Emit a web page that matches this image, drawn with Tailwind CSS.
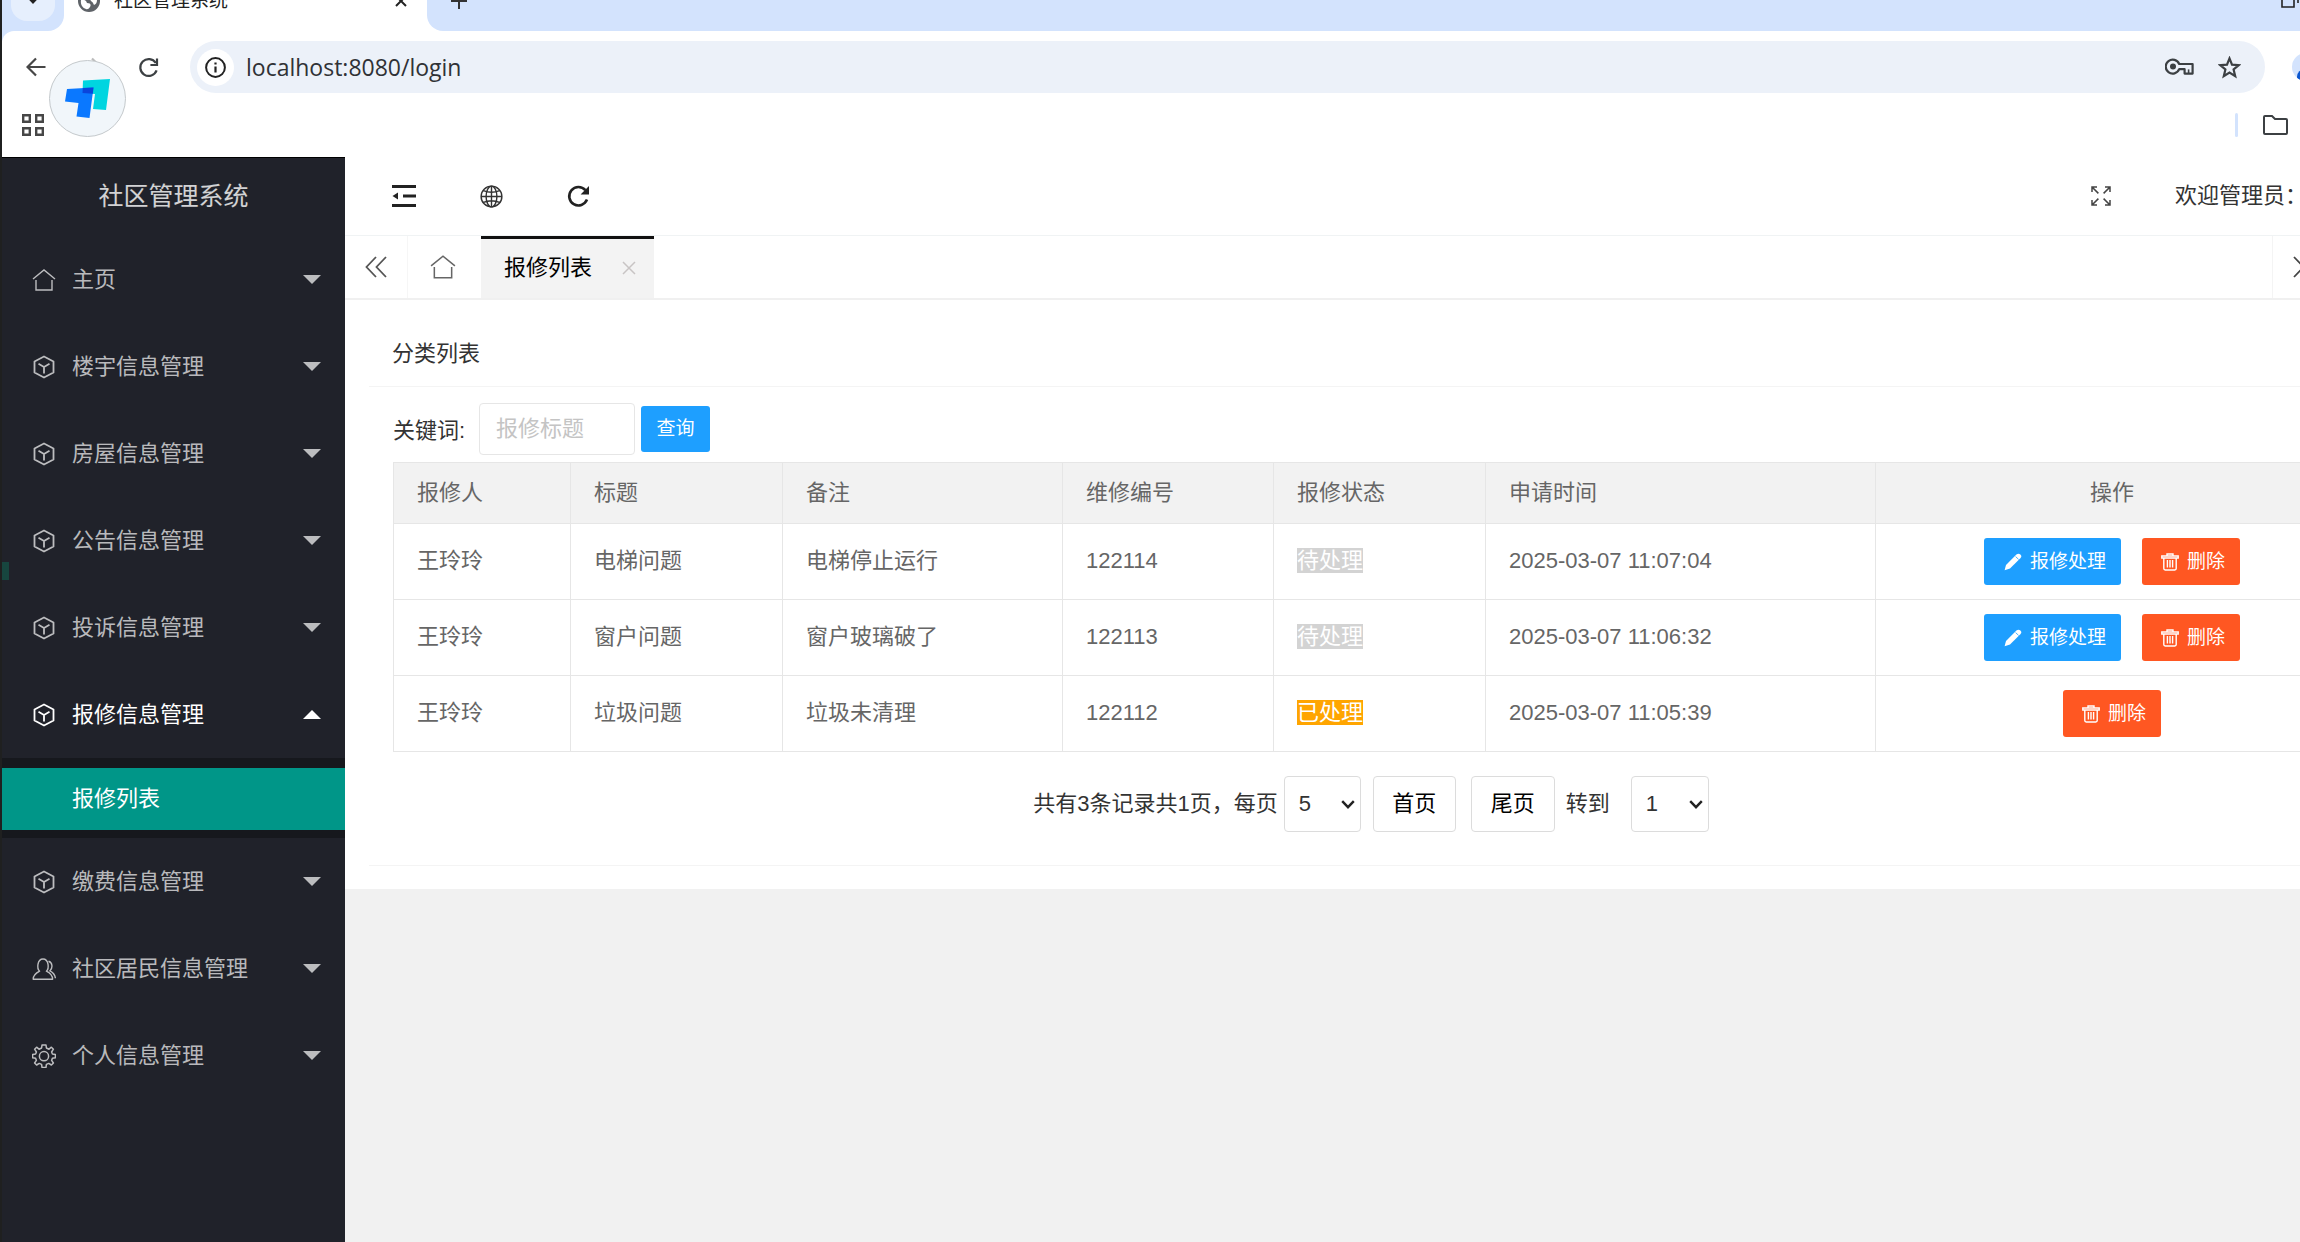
<!DOCTYPE html>
<html lang="zh-CN">
<head>
  <meta charset="UTF-8" />
  <meta name="viewport" content="width=device-width, initial-scale=1" />
  <title>社区管理系统</title>
  <script src="https://cdn.jsdelivr.net/npm/@tailwindcss/browser@4"></script>
  <style>
    body {
      font-family: 'Liberation Sans', 'Noto Sans CJK SC', sans-serif;
    }
  </style>
</head>
<body class="h-screen overflow-hidden bg-[#1f2020] pl-[2px] flex flex-col text-[22px] leading-8 text-[#333]">
  <!-- icons -->
  <svg class="hidden">
    <symbol id="i-home" viewBox="0 0 24 24">
      <path d="M1 11 L12 2 L23 11 M4 12 V22 H20 V12" fill="none" stroke="currentColor" stroke-width="1.4" />
    </symbol>
    <symbol id="i-cube" viewBox="0 0 24 24">
      <path d="M12 1.5 L21.5 6.5 V17.5 L12 22.5 L2.5 17.5 V6.5 Z M6.5 8.8 L12 12 L17.5 8.8 M12 12 V18.5" fill="none" stroke="currentColor" stroke-width="1.8" stroke-linejoin="round" />
    </symbol>
    <symbol id="i-users" viewBox="0 0 24 24">
      <path d="M7.6 14.2 C4.6 11.5 5.2 2 11 2 C16.8 2 17.4 11.5 14.4 14.2 C17.5 15.8 20.6 18 20.6 22.2 H1.2 C1.2 18 4.5 15.8 7.6 14.2 Z" fill="none" stroke="currentColor" stroke-width="1.4" stroke-linejoin="round" />
      <path d="M16.5 4.2 C20.8 5.2 20.8 11.5 18 13.8 C21 15.4 23 17.6 23.4 21.2" fill="none" stroke="currentColor" stroke-width="1.4" />
    </symbol>
    <symbol id="i-gear" viewBox="0 0 24 24">
      <path d="M10 1 H14 L14.4 4 L17 5.2 L19.4 3.2 L21.4 5.2 L19.6 8 L20.4 10 L23.4 10.4 V13.8 L20.4 14.2 L19.6 16.4 L21.4 19 L19.4 21 L16.8 19.4 L14.4 20.4 L14 23.4 H10 L9.6 20.4 L7.2 19.4 L4.6 21 L2.6 19 L4.4 16.4 L3.6 14.2 L0.6 13.8 V10.4 L3.6 10 L4.4 8 L2.6 5.2 L4.6 3.2 L7 5.2 L9.6 4 Z" fill="none" stroke="currentColor" stroke-width="1.5" stroke-linejoin="round" />
      <circle cx="12" cy="12.2" r="4.6" fill="none" stroke="currentColor" stroke-width="1.5" />
    </symbol>
    <symbol id="i-caret" viewBox="0 0 18 9">
      <path d="M0 0 H18 L9 9 Z" fill="currentColor" />
    </symbol>
    <symbol id="i-edit" viewBox="0 0 18 18">
      <path d="M0.6 17.2 L2 12 L12.4 1.6 Q14.4 -0.2 16.4 1.4 Q18.2 3.2 16.6 5 L6 15.6 Z" fill="currentColor" />
      <path d="M11.6 3.6 L14.6 6.4" stroke="#1e9fff" stroke-width="0.8" />
    </symbol>
    <symbol id="i-trash" viewBox="0 0 18 18">
      <path d="M6 2.4 V1 H12 V2.4 M0.8 3 H17.2 V5 H0.8 Z M2.8 5 V15.6 Q2.8 17 4.2 17 H13.8 Q15.2 17 15.2 15.6 V5 M6.4 7 V14.6 M9 7 V14.6 M11.6 7 V14.6" fill="none" stroke="currentColor" stroke-width="1.4" />
    </symbol>
    <symbol id="i-chevron" viewBox="0 0 14 9">
      <path d="M1.2 1.2 L7 7.2 L12.8 1.2" fill="none" stroke="#222" stroke-width="2.4" />
    </symbol>
  </svg>

  <!-- browser chrome -->
  <header class="relative bg-[#d3e3fd] text-[#3c4043]">
    <div class="flex items-end h-[31px] overflow-hidden bg-white">
      <div class="w-[62px] h-[60px] shrink-0 bg-[#d3e3fd] rounded-br-[16px] flex justify-center">
        <button class="w-[44px] h-[50px] rounded-2xl bg-[#e6effd] flex items-end justify-center pb-[17px]" aria-label="搜索标签页">
          <svg class="w-[14px] h-[9px]"><use href="#i-chevron" /></svg>
        </button>
      </div>
      <div class="w-[363px] h-[60px] shrink-0 bg-white flex items-center pl-[14px] pr-[20px]">
        <svg class="w-[22px] h-[22px]" viewBox="0 0 22 22">
          <circle cx="11" cy="11" r="11" fill="#5f6368" />
          <path d="M3 10 Q8 9 9 13 Q14 13 12 17 Q10 20 8 19 Q2 17 3 10 Z M13 6 Q18 5 19 10 Q19 14 16 15 Q15 12 13 11 Q11 8 13 6 Z" fill="#fff" />
        </svg>
        <span class="pl-[14px] text-[19px] text-[#222]">社区管理系统</span>
        <button class="ml-auto" aria-label="关闭标签页">
          <svg class="w-3 h-3" viewBox="0 0 12 12"><path d="M1 1 L11 11 M11 1 L1 11" stroke="#222" stroke-width="2" /></svg>
        </button>
      </div>
      <div class="flex-1 h-[60px] bg-[#d3e3fd] rounded-bl-[16px] flex items-center justify-between pl-[24px]">
        <button aria-label="新标签页">
          <svg class="w-4 h-4" viewBox="0 0 16 16"><path d="M8 0 V16 M0 8 H16" stroke="#333" stroke-width="2" /></svg>
        </button>
        <svg class="w-[19px] h-5" viewBox="0 0 19 20"><path d="M1 4 H13 V16 H1 Z M5 0 H17 V12" fill="none" stroke="#222" stroke-width="1.6" /></svg>
      </div>
    </div>
    <div class="bg-white rounded-tl-[12px] h-[126px] pt-[10px]">
      <div class="flex items-center h-[52px]">
        <button class="ml-[24px]" aria-label="后退">
          <svg class="w-5 h-5" viewBox="0 0 20 20"><path d="M19.5 10 H2 M10 1.5 L1.5 10 L10 18.5" fill="none" stroke="#474747" stroke-width="2.2" /></svg>
        </button>
        <button class="ml-[36px]" aria-label="前进">
          <svg class="w-5 h-5" viewBox="0 0 20 20"><path d="M0.5 10 H18 M10 1.5 L18.5 10 L10 18.5" fill="none" stroke="#bbb" stroke-width="2.2" /></svg>
        </button>
        <button class="ml-[36px]" aria-label="重新加载">
          <svg class="w-[21px] h-[21px]" viewBox="0 0 21 21">
            <path d="M18.6 13.4 A8.4 8.4 0 1 1 17.8 6 M19 1.5 V8 H12.4" fill="none" stroke="#3c4043" stroke-width="2.2" />
          </svg>
        </button>
        <div class="ml-[31px] mr-[35px] h-[52px] flex-1 flex items-center rounded-full bg-[#ecf1f9] pl-[7px] pr-[24px]">
          <span class="w-[37px] h-[37px] rounded-full bg-white flex items-center justify-center">
            <svg class="w-[21px] h-[21px]" viewBox="0 0 21 21">
              <circle cx="10.5" cy="10.5" r="9.4" fill="none" stroke="#222" stroke-width="2" />
              <path d="M10.5 9.4 V15.4 M10.5 5.4 V7.6" stroke="#222" stroke-width="2.2" />
            </svg>
          </span>
          <input type="text" aria-label="地址" value="localhost:8080/login" class="ml-[12px] flex-1 bg-transparent outline-none font-['Open_Sans',sans-serif] text-[23px] text-[#303236]" />
          <svg class="w-[29px] h-[18px]" viewBox="0 0 29 18">
            <path d="M14.2 6 A7 7 0 1 0 14.2 11.2 H19.6 V15.6 H27.6 V6 Z" fill="none" stroke="#3c4043" stroke-width="2.2" stroke-linejoin="round" />
            <circle cx="8" cy="8.6" r="3" fill="#3c4043" />
            <path d="M23.6 11.4 V15" stroke="#3c4043" stroke-width="1.6" />
          </svg>
          <svg class="ml-[24px] w-[23px] h-[23px]" viewBox="0 0 23 23">
            <path d="M11.5 2.4 L14 8.6 L20.8 9.1 L15.6 13.5 L17.2 20.2 L11.5 16.6 L5.8 20.2 L7.4 13.5 L2.2 9.1 L9 8.6 Z" fill="none" stroke="#3c4043" stroke-width="2.2" />
          </svg>
        </div>
      </div>
      <div class="flex items-center h-[64px] pl-[20px] pr-[12px]">
        <svg class="w-[22px] h-[22px]" viewBox="0 0 22 22">
          <path d="M1.2 1.2 H7.8 V7.8 H1.2 Z M14.2 1.2 H20.8 V7.8 H14.2 Z M1.2 14.2 H7.8 V20.8 H1.2 Z M14.2 14.2 H20.8 V20.8 H14.2 Z" fill="none" stroke="#474747" stroke-width="2.4" />
        </svg>
        <span class="ml-auto mr-[25px] w-[3px] h-6 rounded bg-[#d3e3fd]"></span>
        <svg class="w-[25px] h-5" viewBox="0 0 25 20">
          <path d="M1 2 Q1 1 2 1 H9 L12 4 H23 Q24 4 24 5 V18 Q24 19 23 19 H2 Q1 19 1 18 Z" fill="none" stroke="#3c4043" stroke-width="2" />
        </svg>
      </div>
    </div>
    <!-- profile button, cut by the window edge -->
    <div class="absolute -right-[20px] top-[53px] w-[28px] h-[28px] rounded-full bg-[#d3e3fd] overflow-hidden">
      <div class="absolute left-[5px] top-[16px] w-[20px] h-[16px] rounded-full bg-[#0b57d0]"></div>
    </div>
    <!-- floating launcher -->
    <div class="absolute left-[47px] top-[60px] w-[77px] h-[77px] rounded-full bg-[#f1f6fa] border border-[#c4c9cc] flex items-center justify-center">
      <svg class="w-[45px] h-[40px]" viewBox="0 0 45 40">
        <path d="M18 1.5 L45 0 L41 31 L28 30 L30 15 L17.5 14 Z" fill="#00d5e0" />
        <path d="M2 10 L28.5 8.5 L24.5 39 L11.5 37.5 L13.5 24 L0 22.5 Z" fill="#0a78ff" />
        <path d="M17.8 9.1 L28.5 8.5 L27.8 14.8 L17.5 14 Z" fill="#0a45dc" />
      </svg>
    </div>
  </header>

  <div class="flex-1 flex min-h-0">
    <!-- sidebar -->
    <aside class="relative w-[343px] shrink-0 bg-[#20222a] border-t border-black text-white/70">
      <h1 class="h-[78px] pb-[2px] flex items-center justify-center text-[25px] text-white/80">社区管理系统</h1>
      <nav>
        <a href="#" class="flex items-center h-[87px] pl-[30px] pr-[24px]"><svg class="w-6 h-6 mr-[16px]"><use href="#i-home" /></svg>主页<svg class="ml-auto w-[18px] h-[9px]"><use href="#i-caret" /></svg></a>
        <a href="#" class="flex items-center h-[87px] pl-[30px] pr-[24px]"><svg class="w-6 h-6 mr-[16px]"><use href="#i-cube" /></svg>楼宇信息管理<svg class="ml-auto w-[18px] h-[9px]"><use href="#i-caret" /></svg></a>
        <a href="#" class="flex items-center h-[87px] pl-[30px] pr-[24px]"><svg class="w-6 h-6 mr-[16px]"><use href="#i-cube" /></svg>房屋信息管理<svg class="ml-auto w-[18px] h-[9px]"><use href="#i-caret" /></svg></a>
        <a href="#" class="flex items-center h-[87px] pl-[30px] pr-[24px]"><svg class="w-6 h-6 mr-[16px]"><use href="#i-cube" /></svg>公告信息管理<svg class="ml-auto w-[18px] h-[9px]"><use href="#i-caret" /></svg></a>
        <a href="#" class="flex items-center h-[87px] pl-[30px] pr-[24px]"><svg class="w-6 h-6 mr-[16px]"><use href="#i-cube" /></svg>投诉信息管理<svg class="ml-auto w-[18px] h-[9px]"><use href="#i-caret" /></svg></a>
        <a href="#" class="flex items-center h-[87px] pl-[30px] pr-[24px] text-white"><svg class="w-6 h-6 mr-[16px]"><use href="#i-cube" /></svg>报修信息管理<svg class="ml-auto w-[18px] h-[9px] rotate-180"><use href="#i-caret" /></svg></a>
        <div class="bg-[#16181d] pt-[10px] pb-2">
          <a href="#" class="flex items-center h-[62px] pl-[70px] bg-[#009688] text-white">报修列表</a>
        </div>
        <a href="#" class="flex items-center h-[87px] pl-[30px] pr-[24px]"><svg class="w-6 h-6 mr-[16px]"><use href="#i-cube" /></svg>缴费信息管理<svg class="ml-auto w-[18px] h-[9px]"><use href="#i-caret" /></svg></a>
        <a href="#" class="flex items-center h-[87px] pl-[30px] pr-[24px]"><svg class="w-6 h-6 mr-[16px]"><use href="#i-users" /></svg>社区居民信息管理<svg class="ml-auto w-[18px] h-[9px]"><use href="#i-caret" /></svg></a>
        <a href="#" class="flex items-center h-[87px] pl-[30px] pr-[24px]"><svg class="w-6 h-6 mr-[16px]"><use href="#i-gear" /></svg>个人信息管理<svg class="ml-auto w-[18px] h-[9px]"><use href="#i-caret" /></svg></a>
      </nav>
      <!-- hover bar -->
      <span class="absolute left-0 top-[404px] w-[7px] h-[18px] bg-[#17463f]"></span>
    </aside>

    <main class="flex-1 min-w-0 overflow-hidden bg-[#f1f1f1]">
      <!-- top bar -->
      <div class="h-[79px] bg-white border-b border-[#f0f3f4] flex items-center pl-[47px]">
        <button aria-label="侧边伸缩">
          <svg class="w-6 h-6" viewBox="0 0 24 24">
            <path d="M0 2.5 H24 M11 12 H24 M0 21.5 H24" stroke="#222" stroke-width="3" />
            <path d="M0.5 12 L6 8.6 V15.4 Z" fill="#222" />
          </svg>
        </button>
        <button class="ml-[64px]" aria-label="前台">
          <svg class="w-[23px] h-[23px]" viewBox="0 0 23 23">
            <g fill="none" stroke="#333" stroke-width="1.4">
              <circle cx="11.5" cy="11.5" r="10.4" />
              <ellipse cx="11.5" cy="11.5" rx="5.4" ry="10.4" />
              <path d="M11.5 1 V22 M1 11.5 H22 M3.4 5.6 Q11.5 9 19.6 5.6 M3.4 17.4 Q11.5 14 19.6 17.4" />
            </g>
          </svg>
        </button>
        <button class="ml-[64px]" aria-label="刷新">
          <svg class="w-[23px] h-[23px]" viewBox="0 0 23 23">
            <path d="M20 14.6 A9.2 9.2 0 1 1 18.4 5.2" fill="none" stroke="#222" stroke-width="2.6" />
            <path d="M22 1 V9.4 H13.6 Z" fill="#222" />
          </svg>
        </button>
        <button class="ml-auto mr-[64px]" aria-label="全屏">
          <svg class="w-5 h-5" viewBox="0 0 20 20">
            <path d="M1 6 V1 H6 M1 1 L7.4 7.4 M14 1 H19 V6 M19 1 L12.6 7.4 M1 14 V19 H6 M1 19 L7.4 12.6 M19 14 V19 H14 M19 19 L12.6 12.6" fill="none" stroke="#444" stroke-width="1.5" />
          </svg>
        </button>
        <span class="w-[125px] whitespace-nowrap">欢迎管理员：</span>
      </div>

      <!-- page tabs -->
      <div class="h-[64px] bg-white border-b-2 border-[#f0f0f0] flex">
        <button class="w-[63px] flex items-center justify-center border-r border-[#f6f6f6]" aria-label="向左">
          <svg class="w-[22px] h-[22px]" viewBox="0 0 22 22"><path d="M11 1 L1.5 11 L11 21 M21 1 L11.5 11 L21 21" fill="none" stroke="#555" stroke-width="1.8" /></svg>
        </button>
        <a href="#" class="w-[73px] flex items-center justify-center pr-1 text-[#666]" aria-label="首页"><svg class="w-[26px] h-[26px]"><use href="#i-home" /></svg></a>
        <div class="w-[173px] bg-[#f3f3f3] border-t-[3px] border-[#111] flex items-center justify-between pl-[23px] pr-[18px] pb-[2px] text-black">
          报修列表
          <button aria-label="关闭"><svg class="w-[14px] h-[14px]" viewBox="0 0 14 14"><path d="M1 1 L13 13 M13 1 L1 13" stroke="#c8c4c4" stroke-width="1.5" /></svg></button>
        </div>
        <button class="ml-auto w-[28px] overflow-hidden border-l border-[#f4f4f4] flex items-center pl-[20px]" aria-label="向右">
          <svg class="w-[22px] h-[22px] shrink-0" viewBox="0 0 22 22"><path d="M1 1 L10.5 11 L1 21 M11 1 L20.5 11 L11 21" fill="none" stroke="#444" stroke-width="1.8" /></svg>
        </button>
      </div>

      <!-- card, runs past the right edge of the window -->
      <div class="bg-white -mr-[97px] pt-[22px] px-[24px] pb-[23px]">
        <section class="border-b border-[#f4f4f4] pb-[33px]">
          <h2 class="h-[65px] flex items-center px-[23px] border-b border-[#f4f4f4]">分类列表</h2>
          <div class="px-[24px]">
            <form class="flex items-center pt-[16px]">
              <label for="keyword" class="w-[86px] pt-1">关键词:</label>
              <input id="keyword" type="text" placeholder="报修标题" class="w-[156px] h-[52px] border border-[#e6e6e6] rounded-sm pl-[16px] outline-none placeholder:text-[#c4c4c4]" />
              <button type="button" class="ml-[6px] w-[69px] h-[46px] rounded-[3px] bg-[#1e9fff] text-white text-[19px]">查询</button>
            </form>
            <table class="mt-[7px] w-full table-fixed border-collapse text-left text-[#666] bg-white">
              <colgroup>
                <col class="w-[177px]" />
                <col class="w-[212px]" />
                <col class="w-[280px]" />
                <col class="w-[211px]" />
                <col class="w-[212px]" />
                <col class="w-[390px]" />
                <col />
              </colgroup>
              <thead>
                <tr class="h-[61px] bg-[#f2f2f2]">
                  <th class="border border-[#e6e6e6] px-[23px] font-normal">报修人</th>
                  <th class="border border-[#e6e6e6] px-[23px] font-normal">标题</th>
                  <th class="border border-[#e6e6e6] px-[23px] font-normal">备注</th>
                  <th class="border border-[#e6e6e6] px-[23px] font-normal">维修编号</th>
                  <th class="border border-[#e6e6e6] px-[23px] font-normal">报修状态</th>
                  <th class="border border-[#e6e6e6] px-[23px] font-normal">申请时间</th>
                  <th class="border border-[#e6e6e6] px-[23px] font-normal text-center">操作</th>
                </tr>
              </thead>
              <tbody>
                <tr class="h-[76px]">
                  <td class="border border-[#e6e6e6] px-[23px] pb-[2px]">王玲玲</td>
                  <td class="border border-[#e6e6e6] px-[23px] pb-[2px]">电梯问题</td>
                  <td class="border border-[#e6e6e6] px-[23px] pb-[2px]">电梯停止运行</td>
                  <td class="border border-[#e6e6e6] px-[23px] pb-[2px]">122114</td>
                  <td class="border border-[#e6e6e6] px-[23px] pb-[2px]"><span class="inline-block h-[25px] leading-[25px] bg-[#d3d3d3] text-white">待处理</span></td>
                  <td class="border border-[#e6e6e6] px-[23px] pb-[2px]">2025-03-07 11:07:04</td>
                  <td class="border border-[#e6e6e6] px-[23px]">
                    <div class="flex justify-center gap-[21px] text-[19px] text-white">
                      <button class="flex items-center h-[47px] pl-[20px] pr-[15px] gap-[8px] rounded-[3px] bg-[#1e9fff]"><svg class="w-[18px] h-[18px]"><use href="#i-edit" /></svg>报修处理</button>
                      <button class="flex items-center h-[47px] pl-[19px] pr-[15px] gap-[8px] rounded-[3px] bg-[#ff5722]"><svg class="w-[18px] h-[18px]"><use href="#i-trash" /></svg>删除</button>
                    </div>
                  </td>
                </tr>
                <tr class="h-[76px]">
                  <td class="border border-[#e6e6e6] px-[23px] pb-[2px]">王玲玲</td>
                  <td class="border border-[#e6e6e6] px-[23px] pb-[2px]">窗户问题</td>
                  <td class="border border-[#e6e6e6] px-[23px] pb-[2px]">窗户玻璃破了</td>
                  <td class="border border-[#e6e6e6] px-[23px] pb-[2px]">122113</td>
                  <td class="border border-[#e6e6e6] px-[23px] pb-[2px]"><span class="inline-block h-[25px] leading-[25px] bg-[#d3d3d3] text-white">待处理</span></td>
                  <td class="border border-[#e6e6e6] px-[23px] pb-[2px]">2025-03-07 11:06:32</td>
                  <td class="border border-[#e6e6e6] px-[23px]">
                    <div class="flex justify-center gap-[21px] text-[19px] text-white">
                      <button class="flex items-center h-[47px] pl-[20px] pr-[15px] gap-[8px] rounded-[3px] bg-[#1e9fff]"><svg class="w-[18px] h-[18px]"><use href="#i-edit" /></svg>报修处理</button>
                      <button class="flex items-center h-[47px] pl-[19px] pr-[15px] gap-[8px] rounded-[3px] bg-[#ff5722]"><svg class="w-[18px] h-[18px]"><use href="#i-trash" /></svg>删除</button>
                    </div>
                  </td>
                </tr>
                <tr class="h-[76px]">
                  <td class="border border-[#e6e6e6] px-[23px] pb-[2px]">王玲玲</td>
                  <td class="border border-[#e6e6e6] px-[23px] pb-[2px]">垃圾问题</td>
                  <td class="border border-[#e6e6e6] px-[23px] pb-[2px]">垃圾未清理</td>
                  <td class="border border-[#e6e6e6] px-[23px] pb-[2px]">122112</td>
                  <td class="border border-[#e6e6e6] px-[23px] pb-[2px]"><span class="inline-block h-[25px] leading-[25px] bg-[#ffa500] text-white">已处理</span></td>
                  <td class="border border-[#e6e6e6] px-[23px] pb-[2px]">2025-03-07 11:05:39</td>
                  <td class="border border-[#e6e6e6] px-[23px]">
                    <div class="flex justify-center gap-[21px] text-[19px] text-white">
                      <button class="flex items-center h-[47px] pl-[19px] pr-[15px] gap-[8px] rounded-[3px] bg-[#ff5722]"><svg class="w-[18px] h-[18px]"><use href="#i-trash" /></svg>删除</button>
                    </div>
                  </td>
                </tr>
              </tbody>
            </table>
            <!-- pager -->
            <div class="mt-[24px] flex items-center justify-center">
              <label for="pageSize">共有3条记录共1页，每页</label>
              <div class="relative ml-[6px]">
                <select id="pageSize" class="appearance-none w-[77px] h-[56px] border border-[#dcdcdc] rounded-[4px] pl-[14px] bg-white">
                  <option>5</option>
                  <option>10</option>
                </select>
                <svg class="absolute right-[6px] top-[24px] w-[14px] h-[9px] pointer-events-none"><use href="#i-chevron" /></svg>
              </div>
              <button class="ml-[12px] w-[83px] h-[56px] border border-[#dcdcdc] rounded-[4px] text-black">首页</button>
              <button class="ml-[15px] w-[84px] h-[56px] border border-[#dcdcdc] rounded-[4px] text-black">尾页</button>
              <label for="pageNo" class="ml-[11px]">转到</label>
              <div class="relative ml-[21px]">
                <select id="pageNo" class="appearance-none w-[78px] h-[56px] border border-[#dcdcdc] rounded-[4px] pl-[14px] bg-white">
                  <option>1</option>
                </select>
                <svg class="absolute right-[6px] top-[24px] w-[14px] h-[9px] pointer-events-none"><use href="#i-chevron" /></svg>
              </div>
            </div>
          </div>
        </section>
      </div>
    </main>
  </div>
</body>
</html>
